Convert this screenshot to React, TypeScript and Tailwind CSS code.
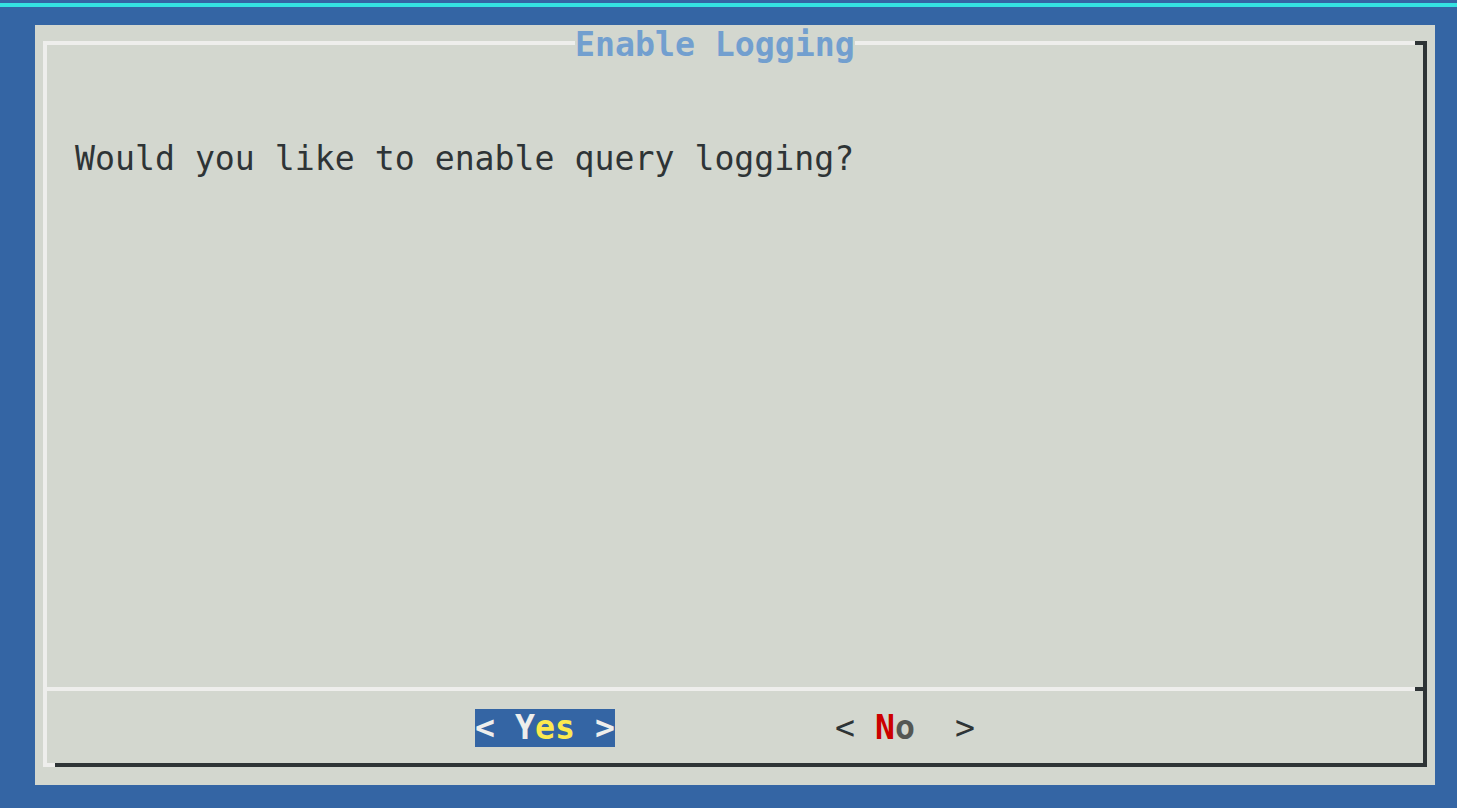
import React from 'react';

const MONO = { fontFamily: '"DejaVu Sans Mono", "Liberation Mono", monospace' };

export default function App() {
  return (
    <div className="w-[1457px] h-[808px] bg-[#3465a4] overflow-hidden" style={MONO}>
      {/* top accent */}
      <div className="h-[3px]" />
      <div className="h-[4px] bg-[#34e2e2]" />

      {/* dialog window */}
      <div className="ml-[35px] mt-[18px] w-[1400px] h-[760px] bg-[#d3d7cf] pt-[16px] pl-[8px]">
        <div className="w-[1384px] flex flex-col">
          {/* top border + title */}
          <div className="flex items-center h-[4px]">
            <div className="w-[532px] h-[4px] bg-[#eeeeec]" />
            <span className="w-[280px] shrink-0 pt-[3px] text-[33.2px] leading-[38px] font-bold text-[#729fcf] whitespace-pre">
              Enable Logging
            </span>
            <div className="flex-1 h-[4px] bg-[#eeeeec]" />
            <div className="w-[12px] h-[4px] bg-[#2e3436]" />
          </div>

          {/* message area */}
          <div className="flex h-[642px]">
            <div className="w-[4px] bg-[#eeeeec]" />
            <div className="flex-1 pt-[95px] pl-[28px]">
              <p className="text-[33.2px] leading-[38px] text-[#2e3436] whitespace-pre">
                Would you like to enable query logging?
              </p>
            </div>
            <div className="w-[4px] bg-[#2e3436]" />
          </div>

          {/* separator */}
          <div className="flex h-[4px]">
            <div className="w-[1372px] bg-[#eeeeec]" />
            <div className="w-[12px] bg-[#2e3436]" />
          </div>

          {/* buttons */}
          <div className="flex h-[72px]">
            <div className="w-[4px] bg-[#eeeeec]" />
            <div className="flex-1 flex items-start pt-[18px] pl-[428px] text-[33.2px] leading-[38px] whitespace-pre">
              <span className="w-[140px] h-[38px] bg-[#3465a4] font-bold text-[#eeeeec]">
                {'< '}
                <span className="text-[#eeeeec]">Y</span>
                <span className="text-[#fce94f]">es</span>
                {' >'}
              </span>
              <span className="ml-[220px] w-[140px] h-[38px] text-[#2e3436]">
                {'< '}
                <span className="font-bold text-[#cc0000]">N</span>
                <span className="font-bold text-[#555753]">o</span>
                {'  >'}
              </span>
            </div>
            <div className="w-[4px] bg-[#2e3436]" />
          </div>

          {/* bottom border */}
          <div className="flex h-[4px]">
            <div className="w-[12px] bg-[#eeeeec]" />
            <div className="flex-1 bg-[#2e3436]" />
          </div>
        </div>
      </div>
    </div>
  );
}
